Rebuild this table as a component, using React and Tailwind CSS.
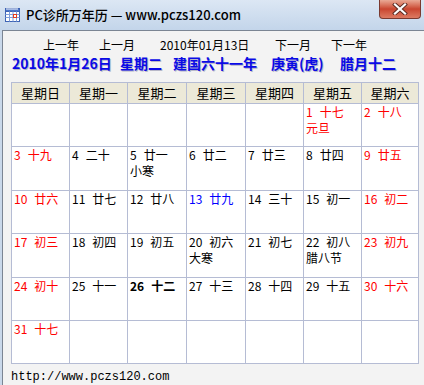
import React from "react";

const CJK = { fontFamily: '"Noto Sans CJK SC", "Liberation Sans", sans-serif' };

const weekdays = ["星期日", "星期一", "星期二", "星期三", "星期四", "星期五", "星期六"];

// [day, lunar, festival, color]  color: r = red, b = blue, k = bold black
const weeks = [
  [null, null, null, null, null, [1, "十七", "元旦", "r"], [2, "十八", null, "r"]],
  [[3, "十九", null, "r"], [4, "二十"], [5, "廿一", "小寒"], [6, "廿二"], [7, "廿三"], [8, "廿四"], [9, "廿五", null, "r"]],
  [[10, "廿六", null, "r"], [11, "廿七"], [12, "廿八"], [13, "廿九", null, "b"], [14, "三十"], [15, "初一"], [16, "初二", null, "r"]],
  [[17, "初三", null, "r"], [18, "初四"], [19, "初五"], [20, "初六", "大寒"], [21, "初七"], [22, "初八", "腊八节"], [23, "初九", null, "r"]],
  [[24, "初十", null, "r"], [25, "十一"], [26, "十二", null, "k"], [27, "十三"], [28, "十四"], [29, "十五"], [30, "十六", null, "r"]],
  [[31, "十七", null, "r"], null, null, null, null, null, null],
];

function CalIcon() {
  return (
    <svg width="15" height="14" viewBox="0 0 15 14">
      <rect x="0.5" y="0.5" width="14" height="13" fill="#fff" stroke="#3d63b4" />
      <rect x="0.5" y="0.5" width="14" height="3" fill="#4a74c8" stroke="#3d63b4" />
      <path d="M2 0v2M4 0v2M6 0v2M8 0v2M10 0v2M12 0v2" stroke="#fff" strokeWidth="1" />
      <path d="M0.5 6.5h14M0.5 9.5h14M4.5 3.5v10M8 3.5v10M11.5 3.5v10" stroke="#7f9fdc" strokeWidth="1" />
      <rect x="8.5" y="6.5" width="3" height="3" fill="#fff" stroke="#e53b1c" />
    </svg>
  );
}

function CloseBtn() {
  return (
    <div className="w-[42px] h-[19px] rounded-b-[4px] border border-t-0 border-[#7a3a30] bg-gradient-to-b from-[#e9a995] via-[#c9452f] to-[#dc7a62] flex items-center justify-center">
      <svg width="16" height="12" viewBox="0 0 16 12">
        <path d="M3 1.5l10 9M13 1.5l-10 9" stroke="#5a2a22" strokeWidth="4" strokeLinecap="square" />
        <path d="M3 1.5l10 9M13 1.5l-10 9" stroke="#fff" strokeWidth="2.2" strokeLinecap="square" />
      </svg>
    </div>
  );
}

function DayCell({ d }) {
  if (!d) return <div className="bg-white" />;
  const [day, lunar, fest, c] = d;
  const color = c === "r" ? "text-[#ff0000]" : c === "b" ? "text-[#0000ff]" : "text-black";
  return (
    <div className={`bg-white pl-[2px] text-[12px] leading-[16px] ${color} ${c === "k" ? "font-bold" : ""}`}>
      <div className="flex">
        <span>{day}</span>
        <span className="ml-[7px]">{lunar}</span>
      </div>
      {fest && <div>{fest}</div>}
    </div>
  );
}

export default function App() {
  return (
    <div className="w-[424px] h-[385px] overflow-hidden bg-[#f0f0f0] flex flex-col" style={CJK}>
      {/* title bar */}
      <div className="h-[30px] shrink-0 flex items-start bg-gradient-to-b from-[#dce7f4] to-[#c3d5ea]">
        <div className="mt-[8px] ml-[5px]">
          <CalIcon />
        </div>
        <div className="ml-[6px] mt-[5px] text-[13px] leading-[20px] font-medium text-black">
          PC诊所万年历 — www.pczs120.com
        </div>
        <div className="ml-auto mr-[3px]">
          <CloseBtn />
        </div>
      </div>

      {/* body */}
      <div className="flex-1 flex bg-[#c9d8ea]">
        <div className="ml-[2px] flex-1 border-l border-t border-[#7b8593] bg-[#f3f3f3] flex flex-col">
          <div className="h-[21px] mt-[3px] flex items-center text-[12px] text-black pl-[40px]">
            <span>上一年</span>
            <span className="ml-[20px]">上一月</span>
            <span className="ml-[25px] w-[92px]">2010年01月13日</span>
            <span className="ml-[23px]">下一月</span>
            <span className="ml-[20px]">下一年</span>
          </div>
          <div className="h-[20px] mt-[-2px] flex items-center pl-[9px] text-[14px] font-bold text-[#0a0ae6] [text-shadow:1px_1px_0_#b8b8c8]">
            <span className="w-[108px] whitespace-nowrap">2010年1月26日</span>
            <span className="w-[53px] whitespace-nowrap">星期二</span>
            <span className="w-[98px] whitespace-nowrap">建国六十一年</span>
            <span className="w-[69px] whitespace-nowrap">庚寅(虎)</span>
            <span className="whitespace-nowrap">腊月十二</span>
          </div>

          <div className="mt-[9px] ml-[8px] w-[408px] grid grid-cols-[57px_57px_58px_58px_57px_57px_56px] grid-rows-[20px_42px_43px_42px_43px_42px_42px] gap-px p-px bg-[#b5bcd4]">
            {weekdays.map((w) => (
              <div key={w} className="bg-[#ece9d8] flex items-center justify-center text-[13px] text-black">
                {w}
              </div>
            ))}
            {weeks.flat().map((d, i) => (
              <DayCell key={i} d={d} />
            ))}
          </div>

          <div className="mt-[6px] ml-[8px] text-[12px] leading-[14px] text-black" style={{ fontFamily: '"Liberation Mono", monospace' }}>
            http://www.pczs120.com
          </div>
        </div>
      </div>
    </div>
  );
}
